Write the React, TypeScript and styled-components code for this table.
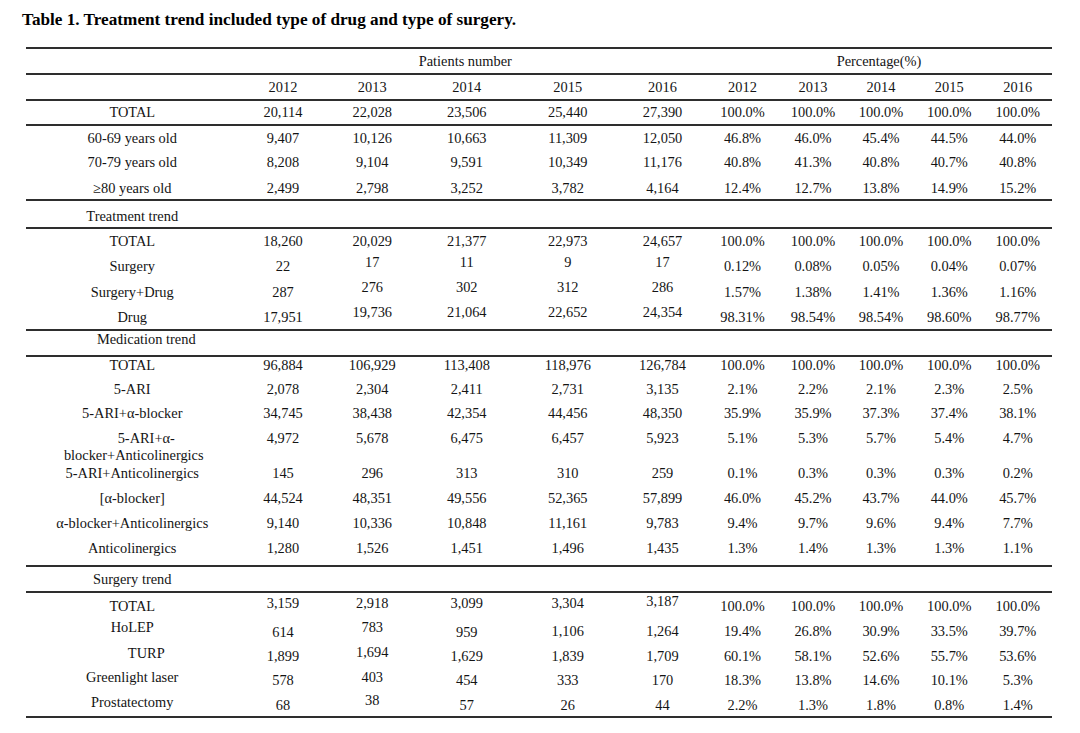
import React from "react";
import styled, { createGlobalStyle } from "styled-components";

const GlobalStyle = createGlobalStyle`
  html, body { margin: 0; padding: 0; background: #fff; }
  body {
    font-family: "Liberation Serif", "Times New Roman", serif;
    color: #141414;
  }
`;

const COLS =
  "212.5px 89px 89.5px 99.5px 102.5px 87px 73px 68px 68px 68.5px 68.5px";

const Page = styled.div`
  width: 1080px;
  height: 733px;
  padding-top: 10px;
  box-sizing: border-box;
  overflow: hidden;
  background: #fff;
`;

const Title = styled.h1`
  margin: 0 0 0 22px;
  font-size: 17.2px;
  line-height: 19px;
  font-weight: 700;
  color: #000;
`;

const Table = styled.div`
  margin: 18px 0 0 26px;
  width: 1026px;
  border-top: 2px solid #2e2e2e;
`;

const Row = styled.div<{ $h: number; $rule?: boolean; $top?: boolean }>`
  display: grid;
  grid-template-columns: ${COLS};
  height: ${(p) => p.$h}px;
  border-bottom: ${(p) => (p.$rule ? "2px solid #2e2e2e" : "none")};
  align-items: ${(p) => (p.$top ? "start" : "center")};
`;

const Cell = styled.div<{ $lift?: number; $indent?: number; $span?: string; $padRight?: number }>`
  text-align: center;
  font-size: 14.4px;
  line-height: 17px;
  white-space: nowrap;
  grid-column: ${(p) => p.$span ?? "auto"};
  padding-left: ${(p) => p.$indent ?? 0}px;
  padding-right: ${(p) => p.$padRight ?? 0}px;
  padding-bottom: ${(p) => ((p.$lift ?? 0) > 0 ? (p.$lift ?? 0) * 2 : 0)}px;
  padding-top: ${(p) => ((p.$lift ?? 0) < 0 ? -(p.$lift ?? 0) * 2 : 0)}px;
`;

const Line = styled.span<{ $indent?: number }>`
  display: block;
  padding-left: ${(p) => p.$indent ?? 0}px;
`;

type RowData = {
  label: React.ReactNode;
  values: string[];
  h: number;
  rule?: boolean;
  top?: boolean;
  lifts?: number[];
  indent?: number;
};

const years = ["2012", "2013", "2014", "2015", "2016"];

const DataRow: React.FC<{ r: RowData }> = ({ r }) => (
  <Row $h={r.h} $rule={r.rule} $top={r.top}>
    <Cell $lift={r.lifts?.[0]} $indent={r.indent}>
      {r.label}
    </Cell>
    {r.values.map((v, i) => (
      <Cell key={i} $lift={r.lifts?.[i + 1]}>
        {v}
      </Cell>
    ))}
  </Row>
);

const SectionRow: React.FC<{ label: string; h: number; lift?: number; indent?: number }> = ({
  label,
  h,
  lift,
  indent,
}) => (
  <Row $h={h} $rule>
    <Cell $lift={lift} $indent={indent}>
      {label}
    </Cell>
  </Row>
);

const ageRows: RowData[] = [
  {
    label: "TOTAL",
    values: ["20,114", "22,028", "23,506", "25,440", "27,390", "100.0%", "100.0%", "100.0%", "100.0%", "100.0%"],
    h: 23,
    rule: true,
  },
  {
    label: "60-69 years old",
    values: ["9,407", "10,126", "10,663", "11,309", "12,050", "46.8%", "46.0%", "45.4%", "44.5%", "44.0%"],
    h: 24,
  },
  {
    label: "70-79 years old",
    values: ["8,208", "9,104", "9,591", "10,349", "11,176", "40.8%", "41.3%", "40.8%", "40.7%", "40.8%"],
    h: 25,
  },
  {
    label: "≥80 years old",
    values: ["2,499", "2,798", "3,252", "3,782", "4,164", "12.4%", "12.7%", "13.8%", "14.9%", "15.2%"],
    h: 24,
    rule: true,
    lifts: [-1, -1, -1, -1, -1, -1, -1, -1, -1, -1, -1],
  },
];

const treatmentRows: RowData[] = [
  {
    label: "TOTAL",
    values: ["18,260", "20,029", "21,377", "22,973", "24,657", "100.0%", "100.0%", "100.0%", "100.0%", "100.0%"],
    h: 25,
  },
  {
    label: "Surgery",
    values: ["22", "17", "11", "9", "17", "0.12%", "0.08%", "0.05%", "0.04%", "0.07%"],
    h: 25,
    lifts: [0, 0, 4, 4, 4, 4, 0, 0, 0, 0, 0],
  },
  {
    label: "Surgery+Drug",
    values: ["287", "276", "302", "312", "286", "1.57%", "1.38%", "1.41%", "1.36%", "1.16%"],
    h: 25,
    lifts: [0, 0, 5, 5, 5, 5, 0, 0, 0, 0, 0],
  },
  {
    label: "Drug",
    values: ["17,951", "19,736", "21,064", "22,652", "24,354", "98.31%", "98.54%", "98.54%", "98.60%", "98.77%"],
    h: 25,
    rule: true,
    lifts: [-1, -1, 4, 4, 4, 4, -1, -1, -1, -1, -1],
  },
];

const medicationRows: RowData[] = [
  {
    label: "TOTAL",
    values: ["96,884", "106,929", "113,408", "118,976", "126,784", "100.0%", "100.0%", "100.0%", "100.0%", "100.0%"],
    h: 24,
    top: true,
  },
  {
    label: "5-ARI",
    values: ["2,078", "2,304", "2,411", "2,731", "3,135", "2.1%", "2.2%", "2.1%", "2.3%", "2.5%"],
    h: 24,
    top: true,
  },
  {
    label: "5-ARI+α-blocker",
    values: ["34,745", "38,438", "42,354", "44,456", "48,350", "35.9%", "35.9%", "37.3%", "37.4%", "38.1%"],
    h: 25,
    top: true,
  },
  {
    label: (
      <>
        <Line $indent={28}>5-ARI+α-</Line>
        <Line $indent={3}>blocker+Anticolinergics</Line>
      </>
    ),
    values: ["4,972", "5,678", "6,475", "6,457", "5,923", "5.1%", "5.3%", "5.7%", "5.4%", "4.7%"],
    h: 35,
    top: true,
  },
  {
    label: "5-ARI+Anticolinergics",
    values: ["145", "296", "313", "310", "259", "0.1%", "0.3%", "0.3%", "0.3%", "0.2%"],
    h: 25,
    top: true,
  },
  {
    label: "[α-blocker]",
    values: ["44,524", "48,351", "49,556", "52,365", "57,899", "46.0%", "45.2%", "43.7%", "44.0%", "45.7%"],
    h: 25,
    top: true,
  },
  {
    label: "α-blocker+Anticolinergics",
    values: ["9,140", "10,336", "10,848", "11,161", "9,783", "9.4%", "9.7%", "9.6%", "9.4%", "7.7%"],
    h: 25,
    top: true,
  },
  {
    label: "Anticolinergics",
    values: ["1,280", "1,526", "1,451", "1,496", "1,435", "1.3%", "1.4%", "1.3%", "1.3%", "1.1%"],
    h: 25,
    top: true,
    rule: true,
  },
];

const surgeryRows: RowData[] = [
  {
    label: "TOTAL",
    values: ["3,159", "2,918", "3,099", "3,304", "3,187", "100.0%", "100.0%", "100.0%", "100.0%", "100.0%"],
    h: 25,
    lifts: [0, 3, 3, 3, 3, 5, 0, 0, 0, 0, 0],
  },
  {
    label: "HoLEP",
    values: ["614", "783", "959", "1,106", "1,264", "19.4%", "26.8%", "30.9%", "33.5%", "39.7%"],
    h: 25,
    lifts: [3, -2, 3, -2, -1, -1, -1, -1, -1, -1, -1],
  },
  {
    label: "TURP",
    values: ["1,899", "1,694", "1,629", "1,839", "1,709", "60.1%", "58.1%", "52.6%", "55.7%", "53.6%"],
    h: 24,
    indent: 28,
    lifts: [2, -1, 3, -1, -1, -1, -1, -1, -1, -1, -1],
  },
  {
    label: "Greenlight laser",
    values: ["578", "403", "454", "333", "170", "18.3%", "13.8%", "14.6%", "10.1%", "5.3%"],
    h: 25,
    lifts: [2, -1, 2, -1, -1, -1, -1, -1, -1, -1, -1],
  },
  {
    label: "Prostatectomy",
    values: ["68", "38", "57", "26", "44", "2.2%", "1.3%", "1.8%", "0.8%", "1.4%"],
    h: 24,
    rule: true,
    lifts: [2, -1, 4, -1, -1, -1, -1, -1, -1, -1, -1],
  },
];

export default function App() {
  return (
    <Page>
      <GlobalStyle />
      <Title>Table 1. Treatment trend included type of drug and type of surgery.</Title>
      <Table>
        <Row $h={24} $rule>
          <Cell />
          <Cell $span="2 / 7" $padRight={14}>
            Patients number
          </Cell>
          <Cell $span="7 / 12">Percentage(%)</Cell>
        </Row>
        <Row $h={24} $rule>
          <Cell />
          {[...years, ...years].map((y, i) => (
            <Cell key={i}>{y}</Cell>
          ))}
        </Row>
        {ageRows.map((r, i) => (
          <DataRow key={i} r={r} />
        ))}
        <SectionRow label="Treatment trend" h={26} lift={-2} />
        {treatmentRows.map((r, i) => (
          <DataRow key={i} r={r} />
        ))}
        <SectionRow label="Medication trend" h={24} lift={4} indent={28} />
        {medicationRows.map((r, i) => (
          <DataRow key={i} r={r} />
        ))}
        <SectionRow label="Surgery trend" h={24} />
        {surgeryRows.map((r, i) => (
          <DataRow key={i} r={r} />
        ))}
      </Table>
    </Page>
  );
}
